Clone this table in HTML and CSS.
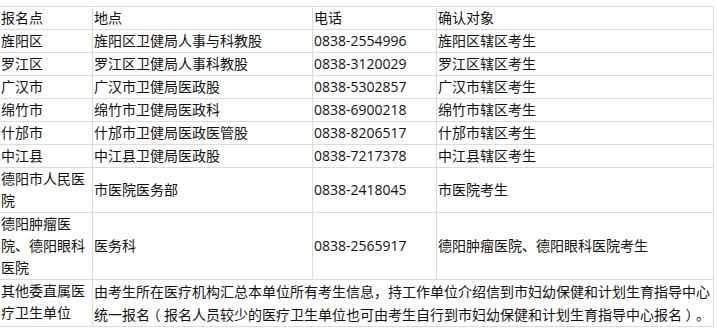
FILE: index.html
```html
<!DOCTYPE html>
<html lang="zh-CN">
<head>
<meta charset="utf-8">
<link rel="stylesheet" href="styles.css">
</head>
<body>
<div class="grid">
  <div class="cell">报名点</div><div class="cell">地点</div><div class="cell">电话</div><div class="cell">确认对象</div>
  <div class="cell">旌阳区</div><div class="cell">旌阳区卫健局人事与科教股</div><div class="cell">0838-2554996</div><div class="cell">旌阳区辖区考生</div>
  <div class="cell">罗江区</div><div class="cell">罗江区卫健局人事科教股</div><div class="cell">0838-3120029</div><div class="cell">罗江区辖区考生</div>
  <div class="cell">广汉市</div><div class="cell">广汉市卫健局医政股</div><div class="cell">0838-5302857</div><div class="cell">广汉市辖区考生</div>
  <div class="cell">绵竹市</div><div class="cell">绵竹市卫健局医政科</div><div class="cell">0838-6900218</div><div class="cell">绵竹市辖区考生</div>
  <div class="cell">什邡市</div><div class="cell">什邡市卫健局医政医管股</div><div class="cell">0838-8206517</div><div class="cell">什邡市辖区考生</div>
  <div class="cell">中江县</div><div class="cell">中江县卫健局医政股</div><div class="cell">0838-7217378</div><div class="cell">中江县辖区考生</div>
  <div class="cell">德阳市人民医院</div><div class="cell mid">市医院医务部</div><div class="cell mid">0838-2418045</div><div class="cell mid">市医院考生</div>
  <div class="cell">德阳肿瘤医院、德阳眼科医院</div><div class="cell mid">医务科</div><div class="cell mid">0838-2565917</div><div class="cell mid">德阳肿瘤医院、德阳眼科医院考生</div>
  <div class="cell">其他委直属医疗卫生单位</div><div class="cell wide">由考生所在医疗机构汇总本单位所有考生信息<span class="punct">，</span>持工作单位介绍信到市妇幼保健和计划生育指导中心统一报名<span class="paren">（</span>报名人员较少的医疗卫生单位也可由考生自行到市妇幼保健和计划生育指导中心报名<span class="paren">）</span><span class="punct">。</span></div>
</div>
</body>
</html>
```
FILE: styles.css
```css
html, body {
  margin: 0;
  padding: 0;
  background: #fff;
}
body {
  font-family: "Open Sans", "Noto Sans CJK SC", sans-serif;
  font-size: 14px;
  line-height: 22px;
  color: #111;
}
.grid {
  display: grid;
  grid-template-columns: 92px 219px 123px 276px;
  gap: 1px;
  width: 715px;
  box-sizing: border-box;
  padding: 1px;
  margin: 6px 0 0 -1px;
  background: #dcdcdc;
}
.cell {
  background: #fff;
  padding: 0 0 0 1px;
  overflow-wrap: anywhere;
}
.mid {
  display: flex;
  align-items: center;
}
.wide {
  grid-column: span 3;
}
.punct {
  font-family: "Noto Sans CJK TC", "Noto Sans CJK SC", sans-serif;
}
.paren {
  font-family: "Noto Sans CJK SC", sans-serif;
  font-feature-settings: "halt" 1;
  padding: 0 3.5px;
}
```
